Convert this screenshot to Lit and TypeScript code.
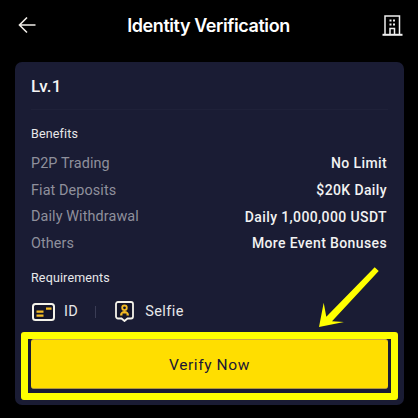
import { LitElement, html, css, svg } from "lit";
import { customElement } from "lit/decorators.js";

const rows = [
  ["P2P Trading", "No Limit"],
  ["Fiat Deposits", "$20K Daily"],
  ["Daily Withdrawal", "Daily 1,000,000 USDT"],
  ["Others", "More Event Bonuses"],
];

@customElement("app-root")
export class AppRoot extends LitElement {
  static styles = css`
    :host { display: block; width: 418px; height: 418px; background: #000; overflow: hidden; position: relative; font-family: Roboto, "Noto Sans", sans-serif; color: #f3f3f3; }
    .header { height: 50px; padding: 0 15px 0 18px; display: flex; align-items: center; justify-content: space-between; }
    .header svg { display: block; }
    .title { font-family: Inter, sans-serif; font-size: 18px; font-weight: 600; color: #fff; letter-spacing: -0.42px; margin-left: -1px; }
    .card { margin: 12px 14px 0 15px; height: 343px; box-sizing: border-box; background: #1a1c34; border-radius: 7px; padding: 0 16px; display: flex; flex-direction: column; }
    .level { height: 47px; display: flex; align-items: center; font-size: 17px; font-weight: 500; color: #f5f5f5; border-bottom: 1px solid #1f2139; letter-spacing: 0.2px; }
    .label { font-size: 12.5px; font-weight: 400; color: #e8e8ea; line-height: 16px; letter-spacing: 0.15px; }
    .benefits { margin-top: 16px; }
    .list { margin-top: 8px; display: flex; flex-direction: column; }
    .row { height: 26.7px; display: flex; align-items: center; justify-content: space-between; font-size: 14.4px; padding-right: 1px; }
    .row .k { color: #8f909c; letter-spacing: 0.1px; }
    .row .v { color: #f2f2f2; font-weight: 500; font-size: 14px; letter-spacing: 0.38px; }
    .reqs { margin-top: 13px; }
    .req-row { margin-top: 14px; height: 24px; display: flex; align-items: center; font-size: 14.5px; color: #e8e8ea; }
    .req-row .idcard { margin-left: 1px; }
    .req-row .id { margin-left: 9px; letter-spacing: 0.4px; }
    .sep { width: 1px; height: 12px; background: #3a3c55; margin: 0 19px 0 17px; }
    .req-row .selfie { margin-left: 11px; letter-spacing: 0.4px; }
    .btn { margin: 15px 0 0 0; height: 50px; padding-top: 2px; background: #ffde00; border-radius: 3px; border-top: 1px solid #c9a94a; border-bottom: 1px solid #b39a3c; box-sizing: border-box; display: flex; align-items: center; justify-content: center; font-size: 15.5px; font-weight: 400; color: #1a1736; letter-spacing: 0.6px; }
    .frame { position: absolute; left: 21px; top: 332px; width: 377px; height: 68px; box-sizing: border-box; border: 7px solid #ffff00; border-radius: 3px; pointer-events: none; }
    .arrow { position: absolute; left: 310px; top: 260px; pointer-events: none; }
  `;

  render() {
    return html`
      <div class="header">
        <svg width="18" height="18" viewBox="0 0 18 18" fill="none" stroke="#f0ede8" stroke-width="1.6">
          <path d="M17.500 9H1.500M9 1.500L1.500 9l7.500 7.500" />
        </svg>
        <div class="title">Identity Verification</div>
        <svg width="21" height="21" viewBox="0 0 21 21" fill="none" stroke="#f0f0f0" stroke-width="1.5">
          <path d="M3 20V1h14.500v19" />
          <path d="M0.500 19.800h20" stroke-width="2" />
          <path d="M8 19.500V13.500h4.500v6" />
          <path d="M7.500 5.500h2M11 5.500h2M7.500 9.500h2M11 9.500h2" stroke-width="2" />
        </svg>
      </div>
      <div class="card">
        <div class="level">Lv.1</div>
        <div class="label benefits">Benefits</div>
        <div class="list">
          ${rows.map(
            ([k, v]) => html`<div class="row"><span class="k">${k}</span><span class="v">${v}</span></div>`
          )}
        </div>
        <div class="label reqs">Requirements</div>
        <div class="req-row">
          <svg class="idcard" width="23" height="18" viewBox="0 0 23 18" fill="none">
            <rect x="1" y="1" width="21" height="16" rx="2.500" stroke="#f5f3ea" stroke-width="2" fill="#14152a" />
            <path d="M4.500 7.500h7v2.200h-7zM4.500 11.500h7v2.200h-7zM14 4.500h5.500v2.200H14z" fill="#f4bb25" />
          </svg>
          <span class="id">ID</span>
          <span class="sep"></span>
          <svg width="19" height="21" viewBox="0 0 19 21" fill="none">
            <path d="M3 1h13a2 2 0 0 1 2 2v12.500a2 2 0 0 1-2 2h-3.500l-3 2.500-3-2.500H3a2 2 0 0 1-2-2V3a2 2 0 0 1 2-2z" stroke="#f5f3ea" stroke-width="1.800" fill="#14152a" />
            <circle cx="9.500" cy="6.800" r="2.300" stroke="#f4bb25" stroke-width="1.800" />
            <path d="M5 14.500c0-3 2-4.500 4.500-4.500s4.500 1.500 4.500 4.500h-2.500v-2h-4v2z" fill="#f4bb25" />
          </svg>
          <span class="selfie">Selfie</span>
        </div>
        <div class="btn">Verify Now</div>
      </div>
      <div class="frame"></div>
      <svg class="arrow" width="70" height="72" viewBox="0 0 70 72">
        ${svg`<path d="M64.700 7.300L68.700 11 22 61.300 34 62 9 67 13.700 42.700 16.300 56.700z" fill="#ffff00" />`}
      </svg>
    `;
  }
}
